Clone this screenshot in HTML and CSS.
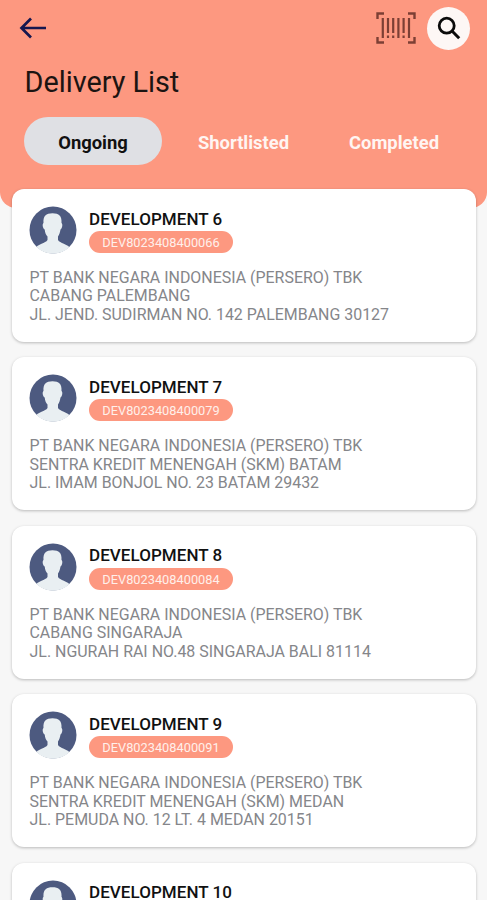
FILE: index.html
```html
<!DOCTYPE html>
<html lang="en">
<head>
    <meta charset="UTF-8">
    <meta name="viewport" content="width=device-width, initial-scale=1.0">
    <title>Delivery List</title>
    <link rel="stylesheet" href="styles.css">
</head>
<body>
    <!-- shared avatar shape -->
    <svg class="defs" aria-hidden="true">
        <symbol id="avatar" viewBox="0 0 48 48">
            <clipPath id="avatar-clip"><circle cx="24" cy="24" r="23.8"/></clipPath>
            <circle cx="24" cy="24" r="23.5" fill="#4d5a80"/>
            <path clip-path="url(#avatar-clip)" fill="#e9eff2" d="M14.500 17C14 10 17 7.300 23.500 7.300C30 7.300 33 10 32.500 17C34 18 33.300 22.500 31.500 23.500C31 27 30 29 29 30.500V34C31 37.500 38 37.500 42.500 43V48H5.500V43C9 37.500 16.500 37.500 18.500 34V30.500C17 29 16 27 15.700 23.500C13.700 22.500 13 18 14.500 17Z"/>
        </symbol>
    </svg>

    <header class="header">
        <div class="toolbar">
            <svg class="back" width="28" height="22" viewBox="0 0 28 22" fill="none" stroke="#15174f" stroke-width="2.7">
                <path d="M27 11H2.500M12 1.500L2.500 11L12 20.500"/>
            </svg>
            <div class="actions">
                <svg class="barcode" width="40" height="32" viewBox="0 0 40 32" fill="none" stroke="#7c3f34">
                    <path stroke-width="2.400" d="M8 1.500H1.500V7M32 1.500H38.500V7M1.500 25V30.500H8M38.500 25V30.500H32"/>
                    <path stroke-width="2.200" d="M6.800 6V26M12 6V21M17.200 6V21M22.400 6V26M27.600 6V21M33 6V26M12 23.500V26M17.200 23.500V26M27.600 23.500V26"/>
                </svg>
                <button class="search" aria-label="Search">
                    <svg width="24" height="24" viewBox="0 0 24 24" fill="none" stroke="#0b0b0b">
                        <circle cx="9.700" cy="9.700" r="7.500" stroke-width="2.800"/>
                        <path d="M15 15L22.200 22.200" stroke-width="3"/>
                    </svg>
                </button>
            </div>
        </div>
        <h1>Delivery List</h1>
        <nav class="tabs">
            <a class="tab active">Ongoing</a>
            <a class="tab">Shortlisted</a>
            <a class="tab">Completed</a>
        </nav>
    </header>

    <main class="list">
        <article class="card">
            <div class="person">
                <svg class="avatar"><use href="#avatar"/></svg>
                <div>
                    <h2>DEVELOPMENT 6</h2>
                    <span class="code">DEV8023408400066</span>
                </div>
            </div>
            <p>PT BANK NEGARA INDONESIA (PERSERO) TBK<br>CABANG PALEMBANG<br>JL. JEND. SUDIRMAN NO. 142 PALEMBANG 30127</p>
        </article>
        <article class="card">
            <div class="person">
                <svg class="avatar"><use href="#avatar"/></svg>
                <div>
                    <h2>DEVELOPMENT 7</h2>
                    <span class="code">DEV8023408400079</span>
                </div>
            </div>
            <p>PT BANK NEGARA INDONESIA (PERSERO) TBK<br>SENTRA KREDIT MENENGAH (SKM) BATAM<br>JL. IMAM BONJOL NO. 23 BATAM 29432</p>
        </article>
        <article class="card">
            <div class="person">
                <svg class="avatar"><use href="#avatar"/></svg>
                <div>
                    <h2>DEVELOPMENT 8</h2>
                    <span class="code">DEV8023408400084</span>
                </div>
            </div>
            <p>PT BANK NEGARA INDONESIA (PERSERO) TBK<br>CABANG SINGARAJA<br>JL. NGURAH RAI NO.48 SINGARAJA BALI 81114</p>
        </article>
        <article class="card">
            <div class="person">
                <svg class="avatar"><use href="#avatar"/></svg>
                <div>
                    <h2>DEVELOPMENT 9</h2>
                    <span class="code">DEV8023408400091</span>
                </div>
            </div>
            <p>PT BANK NEGARA INDONESIA (PERSERO) TBK<br>SENTRA KREDIT MENENGAH (SKM) MEDAN<br>JL. PEMUDA NO. 12 LT. 4 MEDAN 20151</p>
        </article>
        <article class="card">
            <div class="person">
                <svg class="avatar"><use href="#avatar"/></svg>
                <div>
                    <h2>DEVELOPMENT 10</h2>
                </div>
            </div>
        </article>
    </main>
</body>
</html>
```
FILE: styles.css
```css
* {
    box-sizing: border-box;
}
body {
    margin: 0;
    height: 900px;
    overflow: hidden;
    font-family: Roboto, sans-serif;
    background-color: #f7f7f7;
}
h1, h2, p {
    margin: 0;
}
.defs {
    position: absolute;
    width: 0;
    height: 0;
}
.header {
    height: 208px;
    padding-top: 6px;
    background-color: #fd9880;
    border-radius: 0 0 16px 16px;
}
.toolbar {
    display: flex;
    justify-content: space-between;
    align-items: center;
    height: 44px;
    padding: 0 17px 0 19px;
}
.actions {
    display: flex;
    align-items: center;
    gap: 11px;
}
.search {
    display: flex;
    align-items: center;
    justify-content: center;
    width: 43px;
    height: 43px;
    padding: 0;
    border: none;
    border-radius: 50%;
    background-color: #fdf7f5;
}
h1 {
    margin: 14px 0 0 24.500px;
    font-size: 28.800px;
    font-weight: 400;
    line-height: 36px;
    color: #1c1412;
}
.tabs {
    display: flex;
    margin: 17px 0 0 24px;
}
.tab {
    width: 138px;
    margin-right: 12.500px;
    line-height: 51px;
    height: 48px;
    border-radius: 24px;
    text-align: center;
    font-size: 18.400px;
    font-weight: 700;
    color: #fff5f2;
}
.tab.active {
    background-color: #dfe0e4;
    color: #111;
}
.list {
    display: flex;
    flex-direction: column;
    gap: 15.400px;
    margin-top: -19px;
    padding: 0 11px 0 12px;
}
.card {
    flex: none;
    height: 153px;
    padding: 17px;
    background-color: #fff;
    border-radius: 12px;
    box-shadow: 0 1px 3px rgba(0,0,0,0.25);
}
.person {
    display: flex;
    gap: 12px;
    height: 48px;
}
.avatar {
    width: 48px;
    height: 48px;
}
h2 {
    margin-top: 2.600px;
    font-size: 17px;
    font-weight: 500;
    line-height: 20px;
    letter-spacing: 0.050px;
    color: #111;
}
.code {
    display: block;
    width: 144px;
    height: 22px;
    margin-top: 2.400px;
    border-radius: 11px;
    background-color: #fd9880;
    color: #fff0eb;
    text-align: center;
    font-size: 12.800px;
    line-height: 24px;
}
.card p {
    margin: 15px 0 0 0.500px;
    font-size: 15.950px;
    line-height: 18.400px;
    color: #85868a;
    white-space: nowrap;
}
```
